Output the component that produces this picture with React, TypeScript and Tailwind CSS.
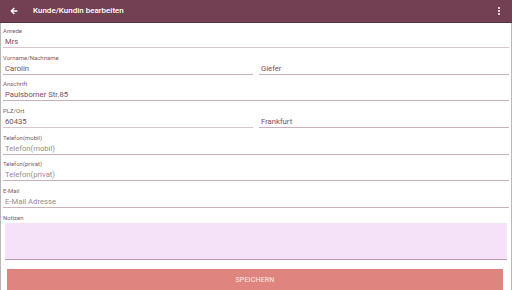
import React from "react";

const F = { fontFamily: "Roboto, 'Noto Sans', sans-serif" };

function Label({ children }: { children: React.ReactNode }) {
  return (
    <div className="h-[10px] pl-[2px] text-[6px] leading-[10px] text-[#7d5a66]">{children}</div>
  );
}

function Field({ value, placeholder, className = "" }: { value?: string; placeholder?: string; className?: string }) {
  return (
    <div className={"h-[12px] border-b border-[#c9b0ba] pl-[2px] text-[7.7px] leading-[11px] " + className}>
      {value ? <span className="text-[#7a4d5d]">{value}</span> : <span className="text-[#9a8b91]">{placeholder}</span>}
    </div>
  );
}

export default function App() {
  return (
    <div style={F} className="w-[512px] h-[290px] overflow-hidden bg-white flex flex-col">
      <div className="h-[23px] shrink-0 bg-[#733f52] border-b border-[#5e3141] grid grid-cols-[33px_1fr_24px] items-center text-white">
        <div className="flex items-center justify-start pl-[10px]">
          <svg width="8" height="8" viewBox="0 0 24 24" fill="white">
            <path d="M22 10H9l5.5-5.5L11.5 1.5 1 12l10.5 10.5 3-3L9 14h13z" />
          </svg>
        </div>
        <div className="text-[8px] font-medium leading-none whitespace-nowrap">Kunde/Kundin bearbeiten</div>
        <div className="flex flex-col items-center gap-[1px] pr-[2px]">
          <div className="w-[2px] h-[2px] rounded-full bg-white" />
          <div className="w-[2px] h-[2px] rounded-full bg-white" />
          <div className="w-[2px] h-[2px] rounded-full bg-white" />
        </div>
      </div>
      <div className="flex-1 border-l border-r border-[#b8b8b8] pt-[3px] pr-[2px]">
        <div className="flex flex-col gap-[4.7px]">
          <div>
            <Label>Anrede</Label>
            <div className="pl-[2px]">
              <Field value="Mrs" className="border-[#d6c6cc]" />
            </div>
          </div>
          <div>
            <Label>Vorname/Nachname</Label>
            <div className="pl-[2px] flex gap-[6px]">
              <Field value="Carolin" className="w-[250px]" />
              <Field value="Giefer" className="flex-1" />
            </div>
          </div>
          <div>
            <Label>Anschrift</Label>
            <div className="pl-[2px]">
              <Field value="Paulsborner Str.85" />
            </div>
          </div>
          <div>
            <Label>PLZ/Ort</Label>
            <div className="pl-[2px] flex gap-[6px]">
              <Field value="60435" className="w-[250px] border-[#d6c6cc]" />
              <Field value="Frankfurt" className="flex-1" />
            </div>
          </div>
          <div>
            <Label>Telefon(mobil)</Label>
            <div className="pl-[2px]">
              <Field placeholder="Telefon(mobil)" className="border-[#b99ca7]" />
            </div>
          </div>
          <div>
            <Label>Telefon(privat)</Label>
            <div className="pl-[2px]">
              <Field placeholder="Telefon(privat)" className="border-[#b99ca7]" />
            </div>
          </div>
          <div>
            <Label>E-Mail</Label>
            <div className="pl-[2px]">
              <Field placeholder="E-Mail Adresse" />
            </div>
          </div>
          <div>
            <Label>Notizen</Label>
            <div className="pl-[4px] pr-[2px]">
              <div className="h-[37px] bg-[#f5e1f8] border-b border-[#b898ac]" />
            </div>
          </div>
        </div>
        <div className="mt-[9px] mx-[6px] h-[22px] bg-[#e0847f] flex items-center justify-center text-[7px] text-[#fbe9e8] tracking-[0.2px]">
          SPEICHERN
        </div>
      </div>
    </div>
  );
}
